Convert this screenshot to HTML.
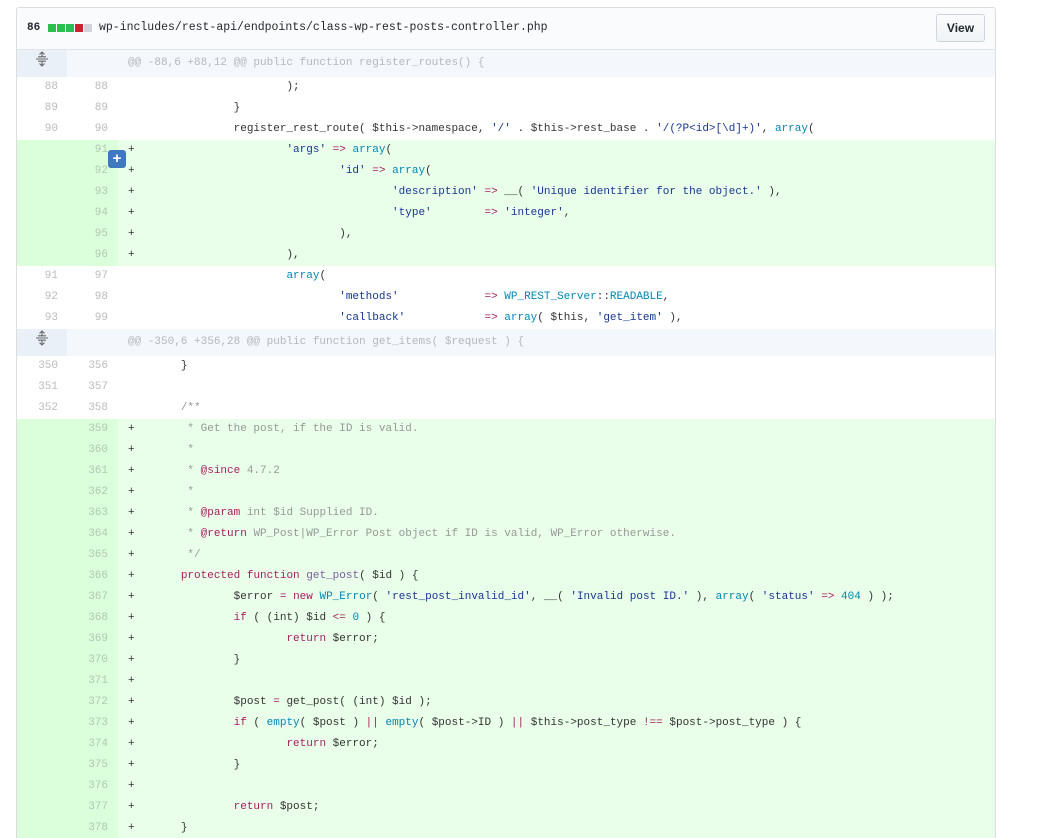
<!DOCTYPE html>
<html><head><meta charset="utf-8"><style>
body{margin:0;background:#fff;font-family:"Liberation Sans",sans-serif;}
.box{position:absolute;left:16px;top:7px;width:978px;border:1px solid #ddd;border-bottom:none;border-radius:3px 3px 0 0;overflow:hidden;height:830px}
.hdr{height:41px;background:#fafbfc;border-bottom:1px solid #e1e4e8;position:relative;font-size:12px;color:#24292e}
.hdr .n{position:absolute;left:10px;top:14px;font-family:"Liberation Mono",monospace;font-weight:bold;font-size:11px}
.bars{position:absolute;left:31px;top:16px;display:flex;gap:1px}
.bars i{width:8px;height:8px;display:block}
.fn{position:absolute;left:82px;top:13px;font-family:"Liberation Mono",monospace;font-size:11.5px}
.btn{position:absolute;left:919px;top:6px;width:47px;height:26px;border:1px solid #d1d5da;border-radius:3px;background:linear-gradient(#fafbfc,#eff3f6);font-size:12px;font-weight:bold;color:#24292e;text-align:center;line-height:26px;box-sizing:border-box;width:49px;height:28px}
table{border-collapse:collapse;width:100%;font-family:"Liberation Mono",monospace;font-size:11px}
td{padding:0;height:21px;line-height:21px;white-space:pre;tab-size:8;-moz-tab-size:8}
td.a{width:50px;text-align:right;padding-right:9px;box-sizing:border-box;color:#bbb}
td.b{width:51px;text-align:right;padding-right:10px;box-sizing:border-box;color:#bbb}
td.c{padding-left:10px;color:#333}
tr.add td{background:#eaffea}
tr.add td.a,tr.add td.b{background:#dbffdb;color:#b0c8b0}
tr.h td{height:27px;background:#f1f8ff;background:#f4f7fb;color:#b5b8bc}
tr.h td.a{background:#eaf0f8}
tr.h td.b{background:#f4f7fb}
.k{color:#a71d5d}.s{color:#183691}.f{color:#0086b3}.cm{color:#969896}
.pl{position:absolute;left:91px;top:142px;width:18px;height:18px;background:#4078c0;border-radius:3px;color:#fff;font-weight:bold;text-align:center;line-height:17px;font-size:15px}
</style></head><body>
<div class="box">
<div class="hdr"><span class="n">86</span><div class="bars"><i style="background:#2cbe4e"></i><i style="background:#2cbe4e"></i><i style="background:#2cbe4e"></i><i style="background:#cb2431"></i><i style="background:#d1d5da"></i></div><span class="fn">wp-includes/rest-api/endpoints/class-wp-rest-posts-controller.php</span><div class="btn">View</div></div>
<table>
<tr class="h"><td class="a" style="text-align:center;padding:0;color:#888"><svg width="14" height="16" viewBox="0 0 14 16"><path d="M7 1v5M4.5 3.5L7 1l2.5 2.5M7 15v-5M4.5 12.5L7 15l2.5-2.5M1 8h12M3 5.8h8M3 10.2h8" stroke="#666" fill="none" stroke-width="1.1"/></svg></td><td class="b"></td><td class="c">@@ -88,6 +88,12 @@ public function register_routes() {</td></tr>
<tr><td class="a">88</td><td class="b">88</td><td class="c"> 			);</td></tr>
<tr><td class="a">89</td><td class="b">89</td><td class="c"> 		}</td></tr>
<tr><td class="a">90</td><td class="b">90</td><td class="c"> 		register_rest_route( $this-&gt;namespace, <span class="s">'/'</span> . $this-&gt;rest_base . <span class="s">'/(?P&lt;id&gt;[\d]+)'</span>, <span class="f">array</span>(</td></tr>
<tr class="add"><td class="a"></td><td class="b">91</td><td class="c">+			<span class="s">'args'</span> <span class="k">=&gt;</span> <span class="f">array</span>(</td></tr>
<tr class="add"><td class="a"></td><td class="b">92</td><td class="c">+				<span class="s">'id'</span> <span class="k">=&gt;</span> <span class="f">array</span>(</td></tr>
<tr class="add"><td class="a"></td><td class="b">93</td><td class="c">+					<span class="s">'description'</span> <span class="k">=&gt;</span> __( <span class="s">'Unique identifier for the object.'</span> ),</td></tr>
<tr class="add"><td class="a"></td><td class="b">94</td><td class="c">+					<span class="s">'type'</span>        <span class="k">=&gt;</span> <span class="s">'integer'</span>,</td></tr>
<tr class="add"><td class="a"></td><td class="b">95</td><td class="c">+				),</td></tr>
<tr class="add"><td class="a"></td><td class="b">96</td><td class="c">+			),</td></tr>
<tr><td class="a">91</td><td class="b">97</td><td class="c"> 			<span class="f">array</span>(</td></tr>
<tr><td class="a">92</td><td class="b">98</td><td class="c"> 				<span class="s">'methods'</span>             <span class="k">=&gt;</span> <span class="f">WP_REST_Server</span>::<span class="f">READABLE</span>,</td></tr>
<tr><td class="a">93</td><td class="b">99</td><td class="c"> 				<span class="s">'callback'</span>            <span class="k">=&gt;</span> <span class="f">array</span>( $this, <span class="s">'get_item'</span> ),</td></tr>
<tr class="h"><td class="a" style="text-align:center;padding:0"><svg width="14" height="16" viewBox="0 0 14 16"><path d="M7 1v5M4.5 3.5L7 1l2.5 2.5M7 15v-5M4.5 12.5L7 15l2.5-2.5M1 8h12M3 5.8h8M3 10.2h8" stroke="#666" fill="none" stroke-width="1.1"/></svg></td><td class="b"></td><td class="c">@@ -350,6 +356,28 @@ public function get_items( $request ) {</td></tr>
<tr><td class="a">350</td><td class="b">356</td><td class="c"> 	}</td></tr>
<tr><td class="a">351</td><td class="b">357</td><td class="c"> </td></tr>
<tr><td class="a">352</td><td class="b">358</td><td class="c"> 	<span class="cm">/**</span></td></tr>
<tr class="add"><td class="a"></td><td class="b">359</td><td class="c">+<span class="cm">	 * Get the post, if the ID is valid.</span></td></tr>
<tr class="add"><td class="a"></td><td class="b">360</td><td class="c">+<span class="cm">	 *</span></td></tr>
<tr class="add"><td class="a"></td><td class="b">361</td><td class="c">+<span class="cm">	 * <span class="k">@since</span> 4.7.2</span></td></tr>
<tr class="add"><td class="a"></td><td class="b">362</td><td class="c">+<span class="cm">	 *</span></td></tr>
<tr class="add"><td class="a"></td><td class="b">363</td><td class="c">+<span class="cm">	 * <span class="k">@param</span> int $id Supplied ID.</span></td></tr>
<tr class="add"><td class="a"></td><td class="b">364</td><td class="c">+<span class="cm">	 * <span class="k">@return</span> WP_Post|WP_Error Post object if ID is valid, WP_Error otherwise.</span></td></tr>
<tr class="add"><td class="a"></td><td class="b">365</td><td class="c">+<span class="cm">	 */</span></td></tr>
<tr class="add"><td class="a"></td><td class="b">366</td><td class="c">+	<span class="k">protected</span> <span class="k">function</span> <span style="color:#795da3">get_post</span>( $id ) {</td></tr>
<tr class="add"><td class="a"></td><td class="b">367</td><td class="c">+		$error <span class="k">=</span> <span class="k">new</span> <span class="f">WP_Error</span>( <span class="s">'rest_post_invalid_id'</span>, __( <span class="s">'Invalid post ID.'</span> ), <span class="f">array</span>( <span class="s">'status'</span> <span class="k">=&gt;</span> <span class="f">404</span> ) );</td></tr>
<tr class="add"><td class="a"></td><td class="b">368</td><td class="c">+		<span class="k">if</span> ( (int) $id <span class="k">&lt;=</span> <span class="f">0</span> ) {</td></tr>
<tr class="add"><td class="a"></td><td class="b">369</td><td class="c">+			<span class="k">return</span> $error;</td></tr>
<tr class="add"><td class="a"></td><td class="b">370</td><td class="c">+		}</td></tr>
<tr class="add"><td class="a"></td><td class="b">371</td><td class="c">+</td></tr>
<tr class="add"><td class="a"></td><td class="b">372</td><td class="c">+		$post <span class="k">=</span> get_post( (int) $id );</td></tr>
<tr class="add"><td class="a"></td><td class="b">373</td><td class="c">+		<span class="k">if</span> ( <span class="f">empty</span>( $post ) <span class="k">||</span> <span class="f">empty</span>( $post-&gt;ID ) <span class="k">||</span> $this-&gt;post_type <span class="k">!==</span> $post-&gt;post_type ) {</td></tr>
<tr class="add"><td class="a"></td><td class="b">374</td><td class="c">+			<span class="k">return</span> $error;</td></tr>
<tr class="add"><td class="a"></td><td class="b">375</td><td class="c">+		}</td></tr>
<tr class="add"><td class="a"></td><td class="b">376</td><td class="c">+</td></tr>
<tr class="add"><td class="a"></td><td class="b">377</td><td class="c">+		<span class="k">return</span> $post;</td></tr>
<tr class="add"><td class="a"></td><td class="b">378</td><td class="c">+	}</td></tr>
</table>
<div class="pl">+</div>
</div>
</body></html>
